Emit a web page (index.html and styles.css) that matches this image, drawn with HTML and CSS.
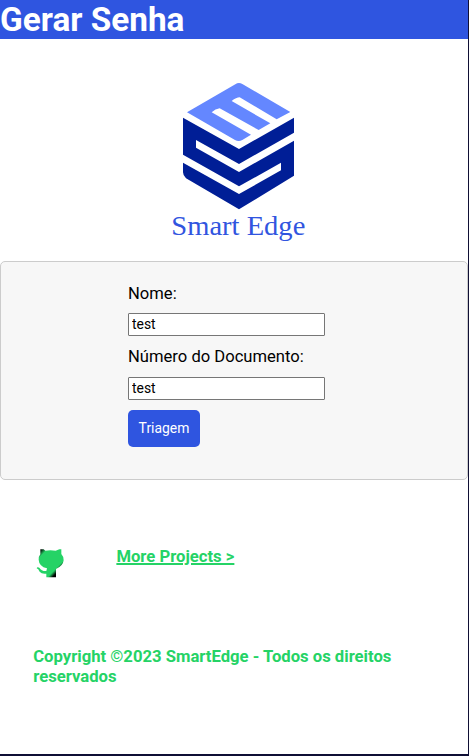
FILE: index.html
```html
<!DOCTYPE html>
<html lang="pt-BR">
<head>
<meta charset="utf-8">
<title>Gerar Senha</title>
<link rel="stylesheet" href="styles.css">
</head>
<body>
<div class="page">
  <header class="header"><h1>Gerar Senha</h1></header>
  <main>
    <svg class="logo" viewBox="0 0 450 525" role="img" aria-label="Smart Edge">
      <path fill="#6487ff" d="M66 112 L211 28 Q221 20 232 27 L376 111 L335 133 L224 67 Q214 67 200 78 L316 145 L281 165 L164 100 Q151 102 140 112 L258 179 L232 195 Q221 201 210 195 Z"/>
      <path fill="#001e96" d="M54 128 L222 222 L387 128 V173 L222 267 L93 195 V218 L222 291 L387 197 V302 L222 403 L63 310 Q54 302 54 292 V263 L222 357 L348 286 V263 L222 334 L54 239 Z"/>
      <text class="logo-name" x="19" y="479" textLength="402" lengthAdjust="spacingAndGlyphs">Smart Edge</text>
    </svg>
    <form class="card">
      <div class="fields">
        <label for="nome">Nome:</label>
        <input id="nome" type="text" value="test">
        <label for="doc">Número do Documento:</label>
        <input id="doc" type="text" value="test">
        <button type="button">Triagem</button>
      </div>
    </form>
  </main>
  <footer class="footer">
    <div class="links">
      <svg class="cat" viewBox="0 0 90 96" aria-hidden="true">
        <defs>
          <linearGradient id="fur" x1="0" y1="0" x2="1" y2="1">
            <stop offset="0.08" stop-color="#000"/>
            <stop offset="0.2" stop-color="#25d366"/>
            <stop offset="0.7" stop-color="#25d366"/>
            <stop offset="0.79" stop-color="#000"/>
          </linearGradient>
        </defs>
        <path fill="url(#fur)" d="M16 7 H26 L31 11 Q46 8 62 11 L73 7 H79 V21 Q86 28 86 40 Q84 57 63 66 V91 H34 V80 Q20 82 14 74 Q10 65 5 64 Q6 59 13 62 Q20 73 34 72 L36 64 Q12 58 11 38 Q11 28 16 22 Z"/>
      </svg>
      <a href="#">More Projects &gt;</a>
    </div>
    <p class="copyright">Copyright ©2023 SmartEdge - Todos os direitos reservados</p>
  </footer>
</div>
</body>
</html>
```
FILE: styles.css
```css
* { box-sizing: border-box; }
body {
  margin: 0;
  background: #0f0f35;
  font-family: Roboto, sans-serif;
  font-size: 16.67px;
}
.page {
  width: 468px;
  height: 754px;
  background: #fff;
  overflow: hidden;
}
.header { height: 39px; background: #2f55e0; }
h1 {
  margin: 0;
  color: #fff;
  font-size: 33.33px;
  line-height: 39px;
}
.logo {
  display: block;
  width: 150px;
  height: 175px;
  margin: 36px 0 11px 164.6px;
}
.logo-name {
  font-family: "Liberation Serif", serif;
  font-size: 85px;
  fill: #3155df;
}
.card {
  height: 218.5px;
  padding: 22px 0 0 127px;
  background: #f7f7f7;
  border: 1px solid #ccc;
  border-radius: 5px;
}
.fields {
  display: flex;
  flex-direction: column;
  align-items: flex-start;
}
label { line-height: 20px; font-size: 16.6px; }
input {
  width: 197px;
  height: 23px;
  margin: 9px 0 11px;
  padding: 0 3px 1px;
  border: 1px solid #767676;
  border-radius: 1px;
  background: #fff;
  color: #000;
  font: 13.9px Roboto, sans-serif;
}
#doc { margin: 10px 0; }
button {
  width: 72px;
  height: 37px;
  padding: 0 0 1px;
  border: 0;
  border-radius: 5px;
  background: #2f55e0;
  color: #fff;
  font: 13.9px Roboto, sans-serif;
}
.footer {
  padding: 67px 33.2px 0;
  color: #25d366;
  font-weight: 700;
}
.links { display: flex; height: 100px; }
.cat {
  width: 30px;
  height: 32px;
  margin: 0 51.3px 0 1.9px;
}
a {
  height: 20px;
  color: inherit;
  line-height: 20px;
  text-decoration-thickness: 1.5px;
}
.copyright { margin: 0; line-height: 20px; }
```
